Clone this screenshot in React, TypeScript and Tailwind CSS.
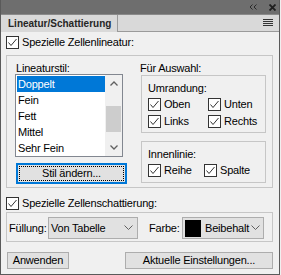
import React from 'react';

function Check({ label, className = '' }: { label: string; className?: string }) {
  return (
    <div className={`flex items-center gap-[3px] h-[13px] ${className}`}>
      <span className="w-[13px] h-[13px] shrink-0 border border-[#333333] bg-white flex items-center justify-center">
        <svg width="11" height="11" viewBox="0 0 11 11">
          <path d="M1.5 5.5 L4 8.5 L9.5 2" stroke="#333333" strokeWidth="1" fill="none" />
        </svg>
      </span>
      <span className="leading-[13px] whitespace-nowrap">{label}</span>
    </div>
  );
}

function Chevron() {
  return (
    <svg width="9" height="6" viewBox="0 0 9 6" className="shrink-0">
      <path d="M0.5 0.5 L4.5 4.5 L8.5 0.5" stroke="#606060" strokeWidth="1" fill="none" />
    </svg>
  );
}

export default function App() {
  const items = ['Doppelt', 'Fein', 'Fett', 'Mittel', 'Sehr Fein'];

  return (
    <div className="w-[281px] h-[275px] bg-[#f0f0f0] font-['Liberation_Sans',Arial,sans-serif] text-[11px] tracking-[-0.2px] text-black">
      <div className="w-[280px] h-[275px] border-x border-b border-[#5a5a5a] flex flex-col">
        {/* Title bar */}
        <div className="h-[14px] bg-[#6e6e6e] flex items-center justify-end gap-[12px] pr-[3px]">
          <svg width="8" height="6" viewBox="0 0 8 6">
            <path d="M3.5 0.5 L1 3 L3.5 5.5 M7.5 0.5 L5 3 L7.5 5.5" stroke="#2a2a2a" strokeWidth="1" fill="none" />
          </svg>
          <svg width="7" height="7" viewBox="0 0 7 7">
            <path d="M0.5 0.5 L6.5 6.5 M6.5 0.5 L0.5 6.5" stroke="#1e1e1e" strokeWidth="1.8" fill="none" />
          </svg>
        </div>

        {/* Tabs */}
        <div className="h-[18px] flex bg-[#d9d9d9] border-t border-[#8a8a8a]">
          <div className="w-[117px] border-r border-[#9a9a9a] flex items-center pl-[7px] font-bold text-[10px] tracking-normal text-[#262626]">
            Lineatur/Schattierung
          </div>
          <div className="flex-1 border-b border-[#9a9a9a] flex items-center justify-end pr-[6px]">
            <svg width="10" height="8" viewBox="0 0 10 8">
              <path d="M0 0.5 H10 M0 2.5 H10 M0 4.5 H10 M0 6.5 H10" stroke="#333333" strokeWidth="1" />
            </svg>
          </div>
        </div>

        {/* Content */}
        <div className="flex-1 pl-[5px] pr-[6px] pt-[4px]">
          <Check label="Spezielle Zellenlineatur:" />

          {/* Lineatur group */}
          <div className="mt-[6px] h-[133px] border border-[#c6c6c6] flex pl-[8px] pt-[6px]">
            <div className="w-[112px] flex flex-col">
              <div className="leading-[12px] h-[12px] pl-[1px]">Lineaturstil:</div>
              <div className="w-[108px] h-[83px] border border-[#828790] bg-white flex">
                <div className="flex-1 pt-[1px] pl-[1px]">
                  {items.map((it, i) => (
                    <div
                      key={it}
                      className={`h-[16px] leading-[16px] pl-[1px] ${i === 0 ? 'bg-[#0078d7] text-white' : ''}`}
                    >
                      {it}
                    </div>
                  ))}
                </div>
                <div className="w-[17px] bg-[#f0f0f0] flex flex-col items-center">
                  <div className="h-[17px] flex items-center justify-center">
                    <svg width="8" height="5" viewBox="0 0 8 5">
                      <path d="M0.5 4.5 L4 1 L7.5 4.5" stroke="#606060" strokeWidth="1.3" fill="none" />
                    </svg>
                  </div>
                  <div className="h-[14px]" />
                  <div className="w-[15px] h-[26px] bg-[#cdcdcd]" />
                  <div className="flex-1" />
                  <div className="h-[17px] flex items-center justify-center">
                    <svg width="8" height="5" viewBox="0 0 8 5">
                      <path d="M0.5 0.5 L4 4 L7.5 0.5" stroke="#606060" strokeWidth="1.3" fill="none" />
                    </svg>
                  </div>
                </div>
              </div>
              <div className="mt-[6px] ml-[1px] w-[111px] h-[21px] border-2 border-[#0078d7] bg-[#e1e1e1] flex items-center justify-center outline-1 outline-dotted outline-black outline-offset-[-4px]">
                Stil ändern...
              </div>
            </div>

            <div className="ml-[13px] w-[126px] flex flex-col">
              <div className="leading-[12px] h-[12px]">Für Auswahl:</div>
              <div className="mt-[1px] ml-[1px] w-[125px] h-[58px] border border-[#c6c6c6] pl-[6px] pt-[6px]">
                <div className="leading-[12px] h-[12px]">Umrandung:</div>
                <div className="mt-[4px] grid grid-cols-[60px_1fr] gap-y-[4px]">
                  <Check label="Oben" />
                  <Check label="Unten" />
                  <Check label="Links" />
                  <Check label="Rechts" />
                </div>
              </div>
              <div className="mt-[8px] ml-[1px] w-[125px] h-[42px] border border-[#c6c6c6] pl-[6px] pt-[6px]">
                <div className="leading-[12px] h-[12px]">Innenlinie:</div>
                <div className="mt-[4px] grid grid-cols-[56px_1fr]">
                  <Check label="Reihe" />
                  <Check label="Spalte" />
                </div>
              </div>
            </div>
          </div>

          <Check label="Spezielle Zellenschattierung:" className="mt-[9px]" />

          {/* Schattierung group */}
          <div className="mt-[2px] h-[30px] border border-[#c6c6c6] flex items-start pt-[4px] pl-[2px]">
            <span className="leading-[22px] w-[39px]">Füllung:</span>
            <div className="w-[90px] h-[22px] border border-[#adadad] bg-[#e1e1e1] flex items-center justify-between pl-[2px] pr-[4px]">
              <span>Von Tabelle</span>
              <Chevron />
            </div>
            <span className="leading-[22px] ml-[11px] w-[33px]">Farbe:</span>
            <div className="w-[82px] h-[22px] border border-[#adadad] bg-[#e1e1e1] flex items-center pl-[2px] pr-[3px]">
              <span className="w-[16px] h-[17px] bg-black shrink-0" />
              <span className="ml-[4px] flex-1">Beibehalt</span>
              <Chevron />
            </div>
          </div>

          {/* Buttons */}
          <div className="mt-[10px] flex justify-between">
            <div className="ml-[1px] w-[62px] h-[17px] border border-[#adadad] bg-[#e1e1e1] flex items-center justify-center">
              Anwenden
            </div>
            <div className="w-[148px] h-[17px] border border-[#adadad] bg-[#e1e1e1] flex items-center justify-center">
              Aktuelle Einstellungen...
            </div>
          </div>
        </div>
      </div>
    </div>
  );
}
